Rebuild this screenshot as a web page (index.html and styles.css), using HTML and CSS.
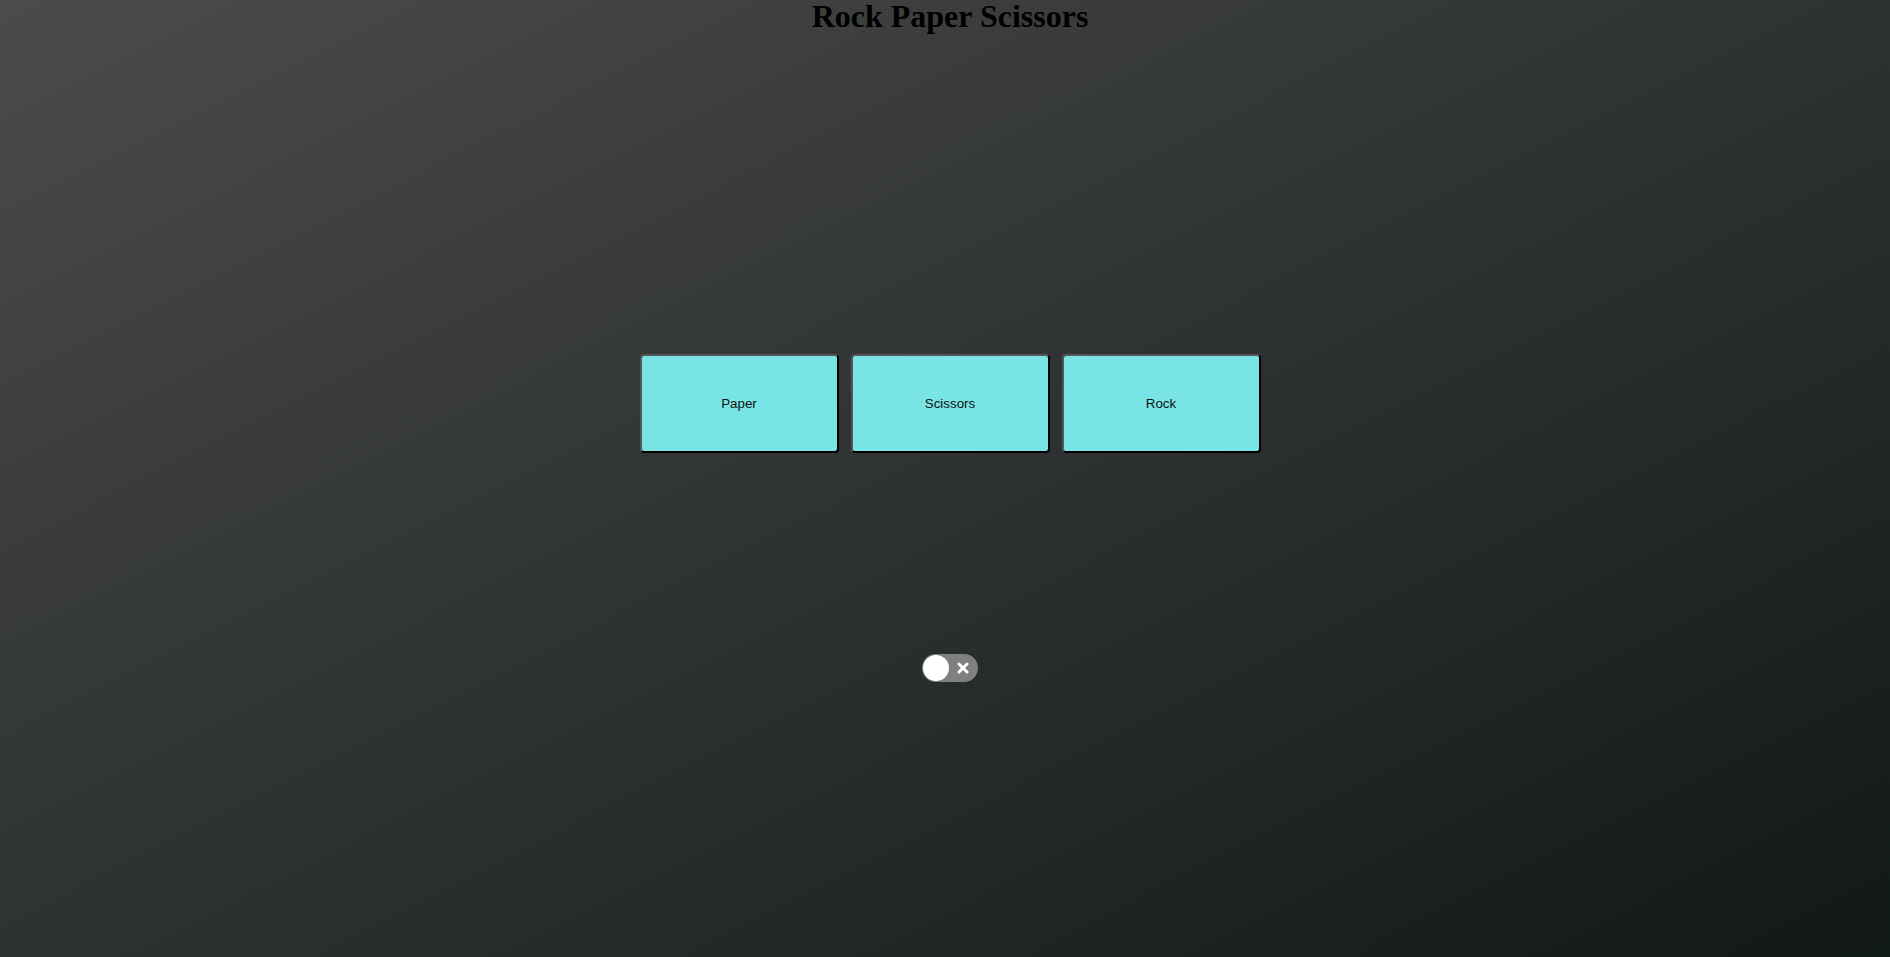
FILE: index.html
```html
<!DOCTYPE html>
<html>
  <head>
    <title>Rock Paper Scissors</title>
    <link rel="stylesheet" href="styles.css">
  </head>
  <body>
    <div class="main-container">
      <h1 class="title">Rock Paper Scissors</h1>

      <div class="choices">
        <button class="choice">Paper</button>
        <button class="choice">Scissors</button>
        <button class="choice">Rock</button>
      </div>

      <div class="toggle">
        <span class="knob"></span>
        <svg class="cross" width="12" height="12" viewBox="0 0 12 12">
          <path d="M2 2 L10 10 M10 2 L2 10" stroke="white" stroke-width="3" stroke-linecap="round"/>
        </svg>
      </div>
    </div>
  </body>
</html>
```
FILE: styles.css
```css
html, body {
  height: 100%;
}
body {
  margin: 0;
  background: linear-gradient(to bottom right, #4b4b4b, #111818);
  font-family: "Liberation Serif", serif;
}
.main-container {
  display: flex;
  flex-direction: column;
  align-items: center;
  padding-left: 10px;
}
.title {
  margin: 0;
  font-size: 32px;
  line-height: 32px;
  color: black;
}
.choices {
  display: flex;
  gap: 12px;
  margin-top: 322px;
}
.choice {
  width: 199px;
  height: 99px;
  background-color: #78e4e6;
  border: 2px solid;
  border-color: #555 #000 #000 #555;
  border-radius: 4px;
  font-family: "Liberation Sans", Arial, sans-serif;
  font-size: 13.33px;
  color: #111;
  cursor: pointer;
}
.toggle {
  margin-top: 201px;
  width: 56px;
  height: 28px;
  border-radius: 14px;
  background-color: #808080;
  display: flex;
  align-items: center;
  gap: 8px;
  padding: 0 1px;
  box-sizing: border-box;
}
.knob {
  width: 26px;
  height: 26px;
  border-radius: 50%;
  background-color: white;
}
```
